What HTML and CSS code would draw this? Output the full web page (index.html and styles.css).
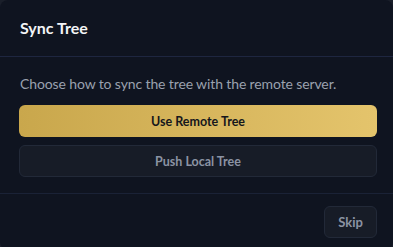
FILE: index.html
```html
<!DOCTYPE html>
<html lang="en">
<head>
    <meta charset="UTF-8">
    <meta name="viewport" content="width=device-width, initial-scale=1.0">
    <title>Sync Tree</title>
    <link rel="stylesheet" href="styles.css">
</head>
<body>
    <div class="dialog">
        <div class="dialog-header">
            <h2>Sync Tree</h2>
        </div>
        <div class="dialog-body">
            <p class="desc">Choose how to sync the tree with the remote server.</p>
            <button class="btn btn-primary">Use Remote Tree</button>
            <button class="btn btn-secondary">Push Local Tree</button>
        </div>
        <div class="dialog-footer">
            <button class="btn btn-skip">Skip</button>
        </div>
    </div>
</body>
</html>
```

FILE: styles.css
```css
body {
    margin: 0;
    padding: 0;
    background-color: #1a1f2a;
    font-family: Lato, "Noto Sans", sans-serif;
}

.dialog {
    background-color: #0f1420;
    border-radius: 8px;
    min-height: 247px;
}

.dialog-header {
    padding: 16px 20px;
    border-bottom: 1px solid #1e2640;
}

.dialog-header h2 {
    margin: 0;
    font-size: 16px;
    line-height: 24px;
    font-weight: 700;
    color: #f3f4f6;
}

.dialog-body {
    padding: 16px 16px 16px 19px;
    display: flex;
    flex-direction: column;
    gap: 8px;
    border-bottom: 1px solid #1a2236;
}

.desc {
    margin: 0 0 2px 1px;
    font-size: 14px;
    line-height: 22px;
    letter-spacing: -0.12px;
    color: #9aa1ae;
}

.btn {
    font-family: inherit;
    font-weight: 700;
    font-size: 12.5px;
    height: 32px;
    border-radius: 6px;
    cursor: pointer;
}

.btn-primary {
    border: none;
    color: #15171c;
    background: linear-gradient(90deg, #c9a74c, #e4c46c);
}

.btn-secondary {
    border: 1px solid #222938;
    background-color: #171c27;
    color: #8b93a3;
}

.dialog-footer {
    display: flex;
    justify-content: flex-end;
    padding: 12px 16px;
}

.btn-skip {
    width: 53px;
    height: 32px;
    border: 1px solid #222938;
    background-color: #171c27;
    color: #8b93a3;
    font-size: 13px;
}
```
